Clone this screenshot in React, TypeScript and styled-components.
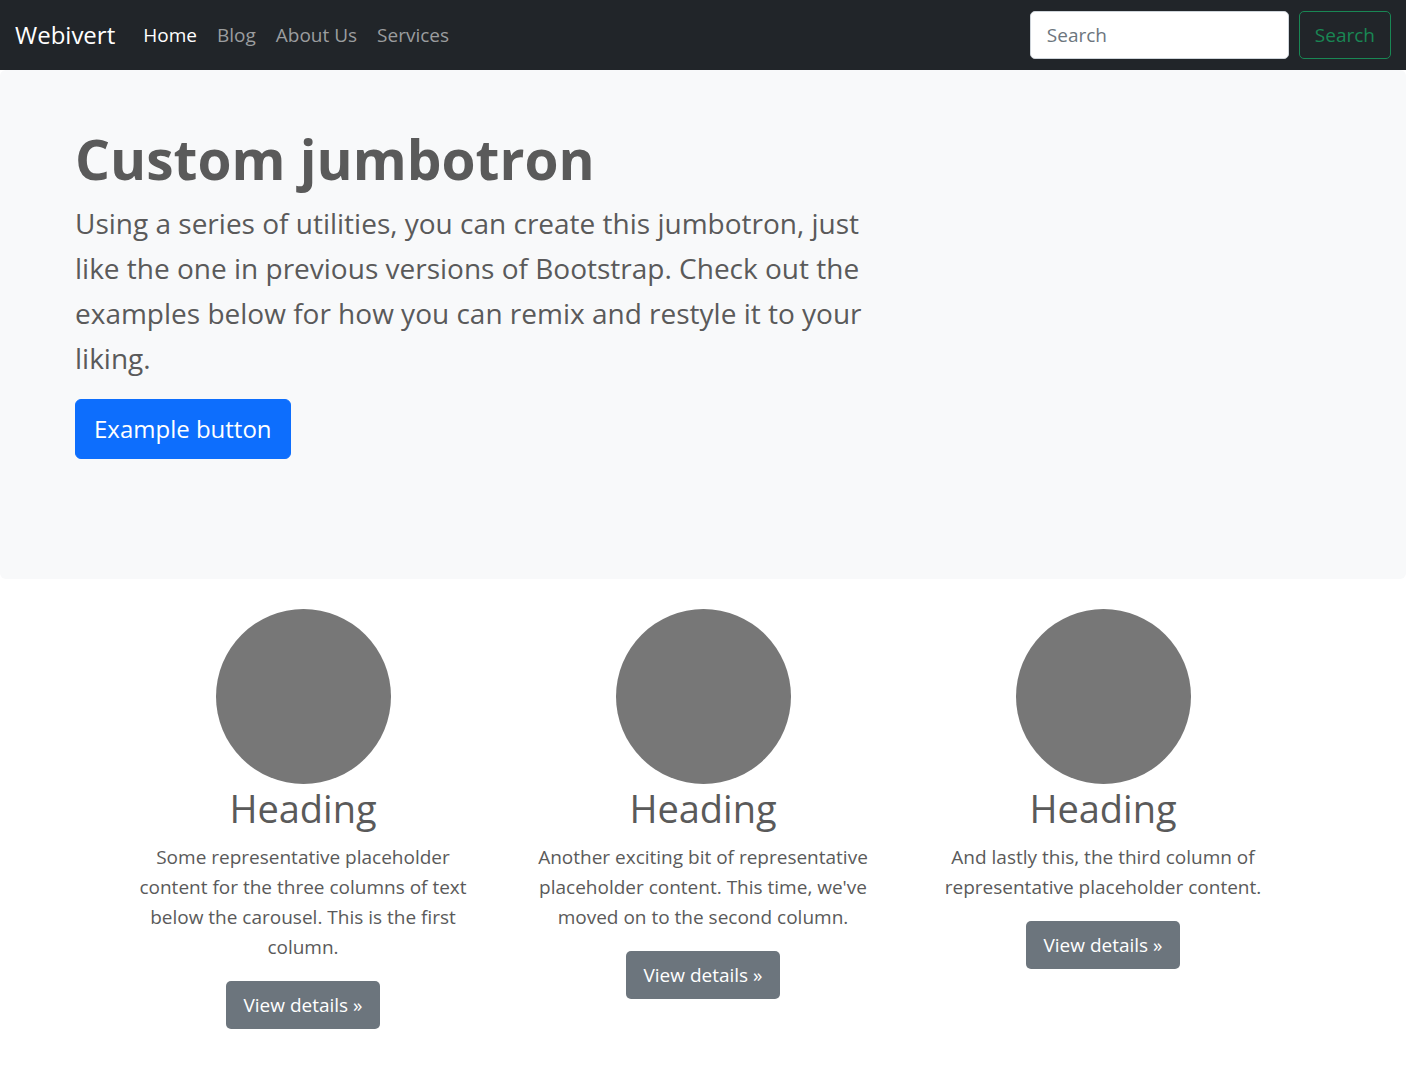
import React from "react";
import styled, { createGlobalStyle } from "styled-components";

const Global = createGlobalStyle`
  *, *::before, *::after { box-sizing: border-box; }
  body {
    margin: 0;
    background: #fff;
    color: #5a5a5a;
    font-family: "Open Sans", "Noto Sans", sans-serif;
    font-size: 19px;
    line-height: 30px;
  }
`;

const Navbar = styled.header`
  display: flex;
  align-items: center;
  min-height: 70px;
  padding: 10px 15px;
  background: #212529;
`;

const Brand = styled.a`
  margin-right: 18px;
  color: #fff;
  font-size: 24px;
  line-height: 36px;
  text-decoration: none;
`;

const NavList = styled.nav`
  display: flex;
  flex: 1;
`;

const NavLink = styled.a<{ $active?: boolean }>`
  padding: 10px;
  color: ${(p) => (p.$active ? "#fff" : "#9b9d9f")};
  text-decoration: none;
`;

const SearchForm = styled.form`
  display: flex;
  gap: 10px;
`;

const SearchInput = styled.input`
  width: 259px;
  height: 48px;
  padding: 8px 16px;
  border: 1px solid #ced4da;
  border-radius: 5px;
  background: #fff;
  color: #212529;
  font: inherit;
  &::placeholder { color: #6c757d; opacity: 1; }
`;

const SearchButton = styled.button`
  height: 48px;
  padding: 8px 15px;
  border: 1px solid #198754;
  border-radius: 5px;
  background: transparent;
  color: #198754;
  font: inherit;
`;

const Jumbotron = styled.section`
  display: flex;
  flex-direction: column;
  align-items: flex-start;
  padding: 60px 75px 120px;
  border-radius: 6px;
  background: #f8f9fa;
`;

const Title = styled.h1`
  margin: 0 0 14px;
  font-size: 55px;
  font-weight: 700;
  line-height: 57px;
`;

const Lead = styled.p`
  max-width: 820px;
  margin: 0 0 18px;
  font-size: 28px;
  line-height: 45px;
`;

const PrimaryButton = styled.button`
  height: 60px;
  padding: 10px 18px;
  border: 1px solid #0d6efd;
  border-radius: 6px;
  background: #0d6efd;
  color: #fff;
  font: inherit;
  font-size: 24px;
`;

const Columns = styled.main`
  display: grid;
  grid-template-columns: repeat(3, 1fr);
  max-width: 1200px;
  margin: 0 auto;
  padding: 30px 0;
`;

const Column = styled.article`
  display: flex;
  flex-direction: column;
  align-items: center;
  padding: 0 26px;
  text-align: center;
`;

const Circle = styled.div`
  width: 175px;
  height: 175px;
  border-radius: 50%;
  background: #777;
`;

const Heading = styled.h2`
  margin: 0 0 10px;
  font-size: 38px;
  font-weight: 400;
  line-height: 48px;
`;

const Description = styled.p`
  margin: 0 0 19px;
`;

const DetailsLink = styled.a`
  padding: 9px 17px;
  border-radius: 5px;
  background: #6c757d;
  color: #fff;
  text-decoration: none;
`;

const links = ["Home", "Blog", "About Us", "Services"];

const features = [
  "Some representative placeholder content for the three columns of text below the carousel. This is the first column.",
  "Another exciting bit of representative placeholder content. This time, we've moved on to the second column.",
  "And lastly this, the third column of representative placeholder content.",
];

export default function App() {
  return (
    <>
      <Global />
      <Navbar>
        <Brand href="#">Webivert</Brand>
        <NavList>
          {links.map((label, i) => (
            <NavLink key={label} href="#" $active={i === 0}>{label}</NavLink>
          ))}
        </NavList>
        <SearchForm role="search">
          <SearchInput type="search" placeholder="Search" aria-label="Search" />
          <SearchButton type="submit">Search</SearchButton>
        </SearchForm>
      </Navbar>
      <Jumbotron>
        <Title>Custom jumbotron</Title>
        <Lead>
          Using a series of utilities, you can create this jumbotron, just like the one in previous
          versions of Bootstrap. Check out the examples below for how you can remix and restyle it
          to your liking.
        </Lead>
        <PrimaryButton type="button">Example button</PrimaryButton>
      </Jumbotron>
      <Columns>
        {features.map((text) => (
          <Column key={text}>
            <Circle />
            <Heading>Heading</Heading>
            <Description>{text}</Description>
            <DetailsLink href="#">View details »</DetailsLink>
          </Column>
        ))}
      </Columns>
    </>
  );
}
